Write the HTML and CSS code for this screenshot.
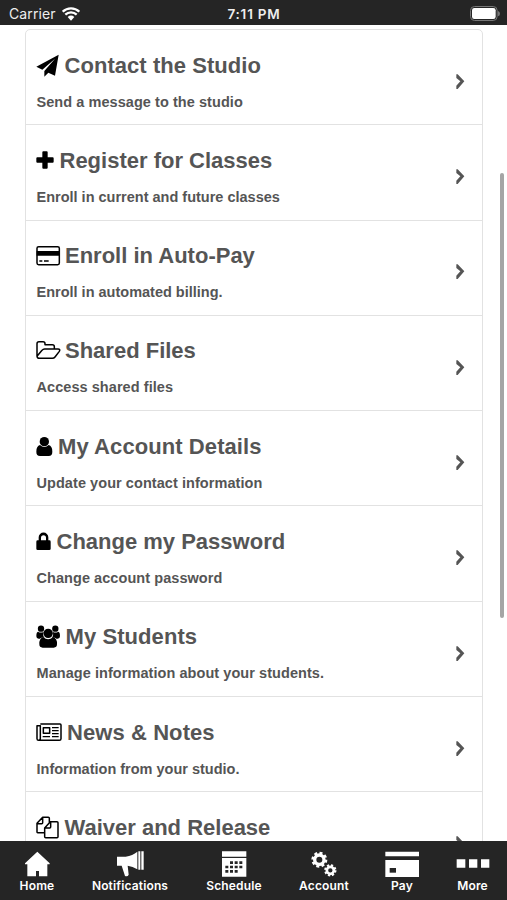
FILE: index.html
```html
<!DOCTYPE html>
<html lang="en">
<head>
<meta charset="utf-8">
<title>Studio Portal</title>
<link rel="stylesheet" href="styles.css">
</head>
<body>
<div class="app">
  <header class="status">
    <div class="carrier"><span>Carrier</span>
      <svg class="wifi" viewBox="0 0 54 42"><path d="M2 14a36 36 0 0 1 50 0M10 23a25 25 0 0 1 34 0" fill="none" stroke="#fff" stroke-width="7"/><path d="M17 30a15 15 0 0 1 20 0L27 41Z" fill="#fff"/></svg>
    </div>
    <div class="time">7:11 PM</div>
    <svg class="battery" viewBox="0 0 90 45"><rect x="1.5" y="1.500" width="80" height="42" rx="12" fill="none" stroke="#777" stroke-width="3"/><rect x="6" y="6" width="71" height="33" rx="7" fill="#fff"/><path d="M84 15q6 2 6 8t-6 8Z" fill="#777"/></svg>
  </header>

  <main class="content">
    <ul class="menu">
      <li class="row contact">
        <div class="text"><h2><svg class="icon" viewBox="0 0 78 72"><path d="M68 2 1 38l18 9L57 14 25 51v17l12-12 20 9Z"/></svg><span>Contact the Studio</span></h2><p>Send a message to the studio</p></div>
        <svg class="chevron" viewBox="0 0 27 48"><path d="m1 1 4 0 20 21-20 23-4 0v-10l12-13L1 12Z"/></svg>
      </li>
      <li class="row register">
        <div class="text"><h2><svg class="icon" viewBox="0 0 78 72"><path d="M22 7h10q3 0 3 3v15h15q3 0 3 3v10q0 3-3 3H35v15q0 3-3 3H22q-3 0-3-3V41H4q-3 0-3-3V28q0-3 3-3h15V10q0-3 3-3Z"/></svg><span>Register for Classes</span></h2><p>Enroll in current and future classes</p></div>
        <svg class="chevron" viewBox="0 0 27 48"><path d="m1 1 4 0 20 21-20 23-4 0v-10l12-13L1 12Z"/></svg>
      </li>
      <li class="row autopay">
        <div class="text"><h2><svg class="icon" viewBox="0 0 78 72"><rect x="3" y="8" width="67" height="54" rx="5" class="line"/><path d="M2 21h69v14H2ZM10 49h9v4h-9ZM24 49h14v4H24Z"/></svg><span>Enroll in Auto-Pay</span></h2><p>Enroll in automated billing.</p></div>
        <svg class="chevron" viewBox="0 0 27 48"><path d="m1 1 4 0 20 21-20 23-4 0v-10l12-13L1 12Z"/></svg>
      </li>
      <li class="row files">
        <div class="text"><h2><svg class="icon" viewBox="0 0 78 72"><path class="line" d="M3 51V14q0-6 6-6h12q6 0 6 6v3h22q6 0 6 6v7M3 51q0 7 7 7h39q5 0 8-4l13-17q4-7-4-7H26q-5 0-8 4L3 52"/></svg><span>Shared Files</span></h2><p>Access shared files</p></div>
        <svg class="chevron" viewBox="0 0 27 48"><path d="m1 1 4 0 20 21-20 23-4 0v-10l12-13L1 12Z"/></svg>
      </li>
      <li class="row account">
        <div class="text"><h2><svg class="icon" viewBox="0 0 78 72"><circle cx="25" cy="20" r="14"/><path d="M12 30q13 12 26 0 11 3 11 20 0 13-11 13H12Q1 63 1 50q0-17 11-20Z"/></svg><span>My Account Details</span></h2><p>Update your contact information</p></div>
        <svg class="chevron" viewBox="0 0 27 48"><path d="m1 1 4 0 20 21-20 23-4 0v-10l12-13L1 12Z"/></svg>
      </li>
      <li class="row password">
        <div class="text"><h2><svg class="icon" viewBox="0 0 78 72"><path fill-rule="evenodd" d="M8 31v-9a14.500 14.500 0 0 1 29 0v9h3q4 0 4 4v21q0 4-4 4H5q-4 0-4-4V35q0-4 4-4Zm7 0h15v-8a7.500 7.500 0 0 0-15 0Z"/></svg><span>Change my Password</span></h2><p>Change account password</p></div>
        <svg class="chevron" viewBox="0 0 27 48"><path d="m1 1 4 0 20 21-20 23-4 0v-10l12-13L1 12Z"/></svg>
      </li>
      <li class="row students">
        <div class="text"><h2><svg class="icon" viewBox="0 0 78 72"><circle cx="15" cy="11" r="9.500"/><circle cx="58" cy="11" r="9.500"/><path d="M6 20q9 5 17 0-4 12 3 18h-9q-3 0-5 3H8q-7 0-7-7 0-13 5-14ZM67 20q-9 5-17 0 4 12-3 18h9q3 0 5 3h4q7 0 7-7 0-13-5-14Z"/><circle cx="36.500" cy="25" r="14"/><path d="M22 37q14 12 29 0 13 3 12 21 0 10-10 10H20q-10 0-10-10-1-18 12-21Z"/></svg><span>My Students</span></h2><p>Manage information about your students.</p></div>
        <svg class="chevron" viewBox="0 0 27 48"><path d="m1 1 4 0 20 21-20 23-4 0v-10l12-13L1 12Z"/></svg>
      </li>
      <li class="row news">
        <div class="text"><h2><svg class="icon" viewBox="0 0 78 72"><path class="line" d="M13 9h59q3 0 3 3v41q0 5-5 5H8q-5 0-5-5V14h10v38q0 6-5 6M22 20h19v17H22Z"/><path d="M48 18h20v4H48Zm0 9h20v4H48Zm0 9h20v4H48ZM20 45h22v4H20Zm28 0h20v4H48Z"/></svg><span>News &amp; Notes</span></h2><p>Information from your studio.</p></div>
        <svg class="chevron" viewBox="0 0 27 48"><path d="m1 1 4 0 20 21-20 23-4 0v-10l12-13L1 12Z"/></svg>
      </li>
      <li class="row waiver">
        <div class="text"><h2><svg class="icon" viewBox="0 0 78 72"><path class="line" d="M26 50H5q-2 0-2-2V22L20 4h17q3 0 3 3v12M20 5v15q0 3-3 3H3M43 17h20q3 0 3 3v42q0 3-3 3H29q-3 0-3-3V36Zm1 1v15q0 3-3 3H27M40 7v13"/></svg><span>Waiver and Release</span></h2></div>
        <svg class="chevron" viewBox="0 0 27 48"><path d="m1 1 4 0 20 21-20 23-4 0v-10l12-13L1 12Z"/></svg>
      </li>
    </ul>
    <div class="scrollbar"></div>
  </main>

  <nav class="tabs">
    <div class="tab"><svg viewBox="0 0 108 81"><path d="M55 5 18 40v3h7v36h26V63h9v16h25V43h7v-3Z"/></svg><span>Home</span></div>
    <div class="tab"><svg viewBox="0 0 108 81"><path d="M15 20h26Q62 17 76 5v53q-14-9-29-11l3 27q-3 7-11 4L29 47H15ZM79 4h6v55h-6ZM88 4h7v55h-7Z"/></svg><span>Notifications</span></div>
    <div class="tab"><svg viewBox="0 0 108 81"><path d="M18 4h73v16H18ZM18 24h73v56H18Z"/><path class="cut" d="M42 34h9v8h-9Zm14 0h9v8h-9Zm14 0h9v8h-9ZM28 47h9v8h-9Zm14 0h9v8h-9Zm14 0h9v8h-9Zm14 0h9v8h-9ZM28 60h9v8h-9Zm14 0h9v8h-9Zm14 0h9v8h-9Z"/></svg><span>Schedule</span></div>
    <div class="tab"><svg viewBox="0 0 108 81"><g class="gear"><circle cx="40" cy="29" r="14"/><circle cx="40" cy="29" r="20" class="teeth" stroke-dasharray="8.7 7"/><circle cx="73" cy="61" r="10.500"/><circle cx="73" cy="61" r="15" class="teeth small" stroke-dasharray="6.4 5.380"/></g></svg><span>Account</span></div>
    <div class="tab"><svg viewBox="0 0 108 81"><path d="M4 5h101v14H4ZM4 30h101v51H4Z"/><path class="cut" d="M17 54h19v14H17Z"/></svg><span>Pay</span></div>
    <div class="tab"><svg viewBox="0 0 108 81"><path d="M5 28h26v25H5ZM42 28h25v25H42ZM78 28h25v25H78Z"/></svg><span>More</span></div>
  </nav>
</div>
</body>
</html>
```

FILE: styles.css
```css
* { box-sizing: border-box; }
body { margin: 0; background: #fff; font-family: "Liberation Sans", Arial, sans-serif; }
.app { width: 507px; height: 900px; display: flex; flex-direction: column; overflow: hidden; }
.status { flex: none; height: 25px; padding: 2px 7px 0 9px; display: grid; grid-template-columns: 1fr auto 1fr; align-items: center; background: #252525; color: #eee; font: 14px Inter, sans-serif; }
.carrier { display: flex; align-items: center; gap: 6px; letter-spacing: .1px; }
.wifi { width: 18px; height: 14px; }
.time { margin-right: 1px; font-size: 13.500px; font-weight: 600; letter-spacing: .8px; }
.battery { width: 30px; height: 15px; justify-self: end; }

.content { flex: 1; min-height: 0; display: flex; justify-content: space-between; padding: 4px 3px 0 25px; overflow: hidden; }
.menu { width: 458px; height: 860px; margin: 0; padding: 0; list-style: none; border: 1.500px solid #e2e2e2; border-radius: 5px; }
.row { height: 95.300px; padding: 22.500px 16px 0 10px; display: flex; justify-content: space-between; border-bottom: 1.500px solid #e2e2e2; color: #555; }
.text h2 { height: 26px; margin: 0; display: flex; align-items: center; font-size: 22px; line-height: 26px; white-space: nowrap; }
.text p { margin: 14px 0 0 .5px; font-size: 14.500px; font-weight: 700; line-height: 18px; letter-spacing: .06px; white-space: nowrap; }
.register .text p, .autopay .text p, .news .text p { letter-spacing: 0; }
.icon { flex: none; width: 26px; height: 24px; fill: #000; }
.icon .line { fill: none; stroke: #000; stroke-width: 4.500; stroke-linejoin: round; }
.contact .icon { margin-right: 2.500px; }
.contact h2 { letter-spacing: .05px; }
.register .icon { margin-right: -2.500px; }
.autopay .icon { margin-right: 3px; }
.files .icon { margin-right: 3px; }
.account .icon { margin-right: -4px; }
.account h2 { letter-spacing: .08px; }
.password .icon { margin-right: -5.500px; }
.students .icon { margin-right: 3.500px; }
.students h2, .news h2 { letter-spacing: .08px; }
.news .icon { margin-right: 5px; }
.waiver .icon { margin-right: 2.500px; }
.chevron { width: 9px; height: 16px; margin-top: 21.300px; margin-right: 1.500px; fill: #555; }
.scrollbar { width: 4px; height: 445px; margin-top: 144px; border-radius: 2px; background: #a5a5a5; }

.tabs { flex: none; height: 59px; padding-top: 9px; display: grid; grid-template-columns: 74px 112px 96px 84px 72px 69px; background: #252525; color: #fff; }
.tab { display: flex; flex-direction: column; align-items: center; font: 600 12px/17px Inter, sans-serif; letter-spacing: .15px; }
.tab svg { width: 36px; height: 27px; fill: #fff; }
.tab .cut { fill: #252525; }
.gear { fill: none; stroke: #fff; stroke-width: 10; }
.gear .teeth { stroke-width: 8; }
.gear circle:nth-child(3) { stroke-width: 8; }
.gear .small { stroke-width: 7; }
```
